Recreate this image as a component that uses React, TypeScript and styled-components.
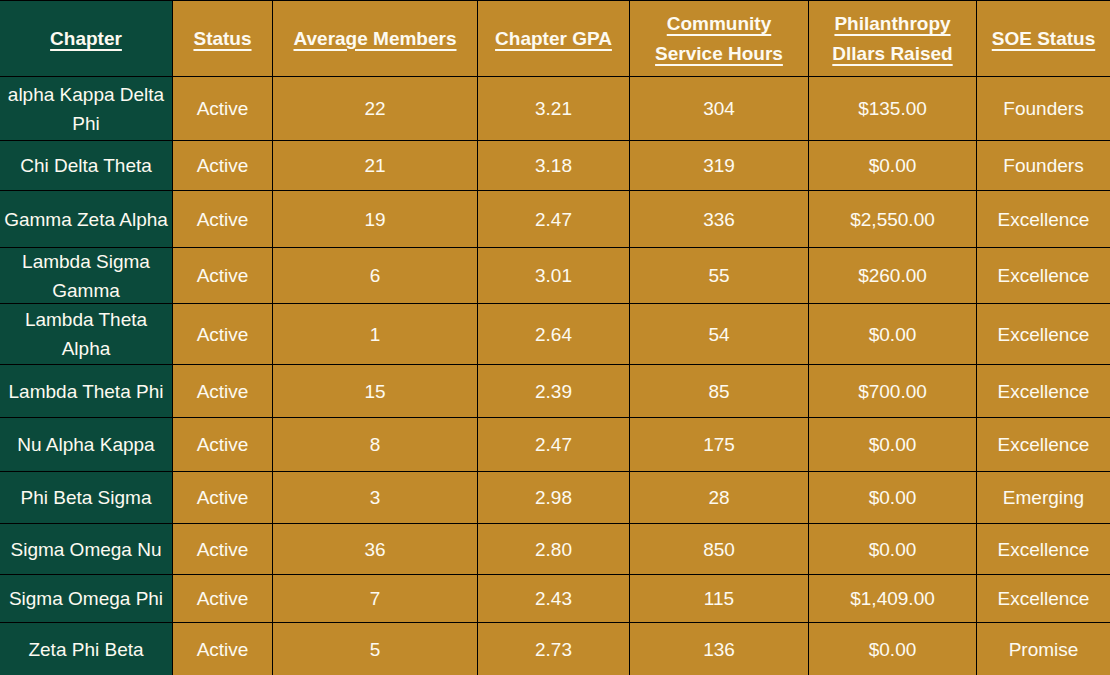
import React from "react";
import styled, { createGlobalStyle } from "styled-components";

type Chapter = {
  name: string;
  status: string;
  members: number;
  gpa: string;
  hours: number;
  raised: string;
  soe: string;
};

const chapters: Chapter[] = [
  { name: "alpha Kappa Delta Phi", status: "Active", members: 22, gpa: "3.21", hours: 304, raised: "$135.00", soe: "Founders" },
  { name: "Chi Delta Theta", status: "Active", members: 21, gpa: "3.18", hours: 319, raised: "$0.00", soe: "Founders" },
  { name: "Gamma Zeta Alpha", status: "Active", members: 19, gpa: "2.47", hours: 336, raised: "$2,550.00", soe: "Excellence" },
  { name: "Lambda Sigma Gamma", status: "Active", members: 6, gpa: "3.01", hours: 55, raised: "$260.00", soe: "Excellence" },
  { name: "Lambda Theta Alpha", status: "Active", members: 1, gpa: "2.64", hours: 54, raised: "$0.00", soe: "Excellence" },
  { name: "Lambda Theta Phi", status: "Active", members: 15, gpa: "2.39", hours: 85, raised: "$700.00", soe: "Excellence" },
  { name: "Nu Alpha Kappa", status: "Active", members: 8, gpa: "2.47", hours: 175, raised: "$0.00", soe: "Excellence" },
  { name: "Phi Beta Sigma", status: "Active", members: 3, gpa: "2.98", hours: 28, raised: "$0.00", soe: "Emerging" },
  { name: "Sigma Omega Nu", status: "Active", members: 36, gpa: "2.80", hours: 850, raised: "$0.00", soe: "Excellence" },
  { name: "Sigma Omega Phi", status: "Active", members: 7, gpa: "2.43", hours: 115, raised: "$1,409.00", soe: "Excellence" },
  { name: "Zeta Phi Beta", status: "Active", members: 5, gpa: "2.73", hours: 136, raised: "$0.00", soe: "Promise" },
];

const headers = [
  "Chapter",
  "Status",
  "Average Members",
  "Chapter GPA",
  "Community Service Hours",
  "Philanthropy Dllars Raised",
  "SOE Status",
];

// row heights as measured from the sheet (header first)
const rowHeights = [75, 63, 49, 56, 55, 60, 52, 53, 51, 50, 47, 52];

export default function App() {
  return (
    <>
      <GlobalStyle />
      <Sheet $rows={rowHeights.map((h) => `${h}px`).join(" ")}>
        {headers.map((h, i) => (
          <HeadCell key={h} $first={i === 0}>
            <HeadText>{h}</HeadText>
          </HeadCell>
        ))}
        {chapters.map((c) => (
          <React.Fragment key={c.name}>
            <Cell $first>{c.name}</Cell>
            <Cell>{c.status}</Cell>
            <Cell>{c.members}</Cell>
            <Cell>{c.gpa}</Cell>
            <Cell>{c.hours}</Cell>
            <Cell>{c.raised}</Cell>
            <Cell>{c.soe}</Cell>
          </React.Fragment>
        ))}
      </Sheet>
    </>
  );
}

const GlobalStyle = createGlobalStyle`
  html, body {
    margin: 0;
    padding: 0;
    background: #c18a2b;
    overflow: hidden;
  }
`;

const Sheet = styled.div<{ $rows: string }>`
  display: grid;
  grid-template-columns: 172px 99px 204px 151px 178px 167px 133px;
  grid-template-rows: ${(p) => p.$rows};
  gap: 1px;
  padding-top: 1px;
  width: 1110px;
  height: 675px;
  box-sizing: border-box;
  background: #000;
  font-family: "Liberation Sans", Arial, sans-serif;
  color: #fdfaf1;
`;

const Cell = styled.div<{ $first?: boolean }>`
  display: flex;
  align-items: center;
  justify-content: center;
  text-align: center;
  padding: 0 2px;
  background: ${(p) => (p.$first ? "#0b4a3b" : "#c18a2b")};
  font-size: 19px;
  line-height: 29px;
`;

const HeadCell = styled(Cell)`
  font-weight: bold;
  line-height: 30px;
`;

const HeadText = styled.span`
  text-decoration: underline;
  text-decoration-thickness: 1.5px;
  text-underline-offset: 4px;
`;
